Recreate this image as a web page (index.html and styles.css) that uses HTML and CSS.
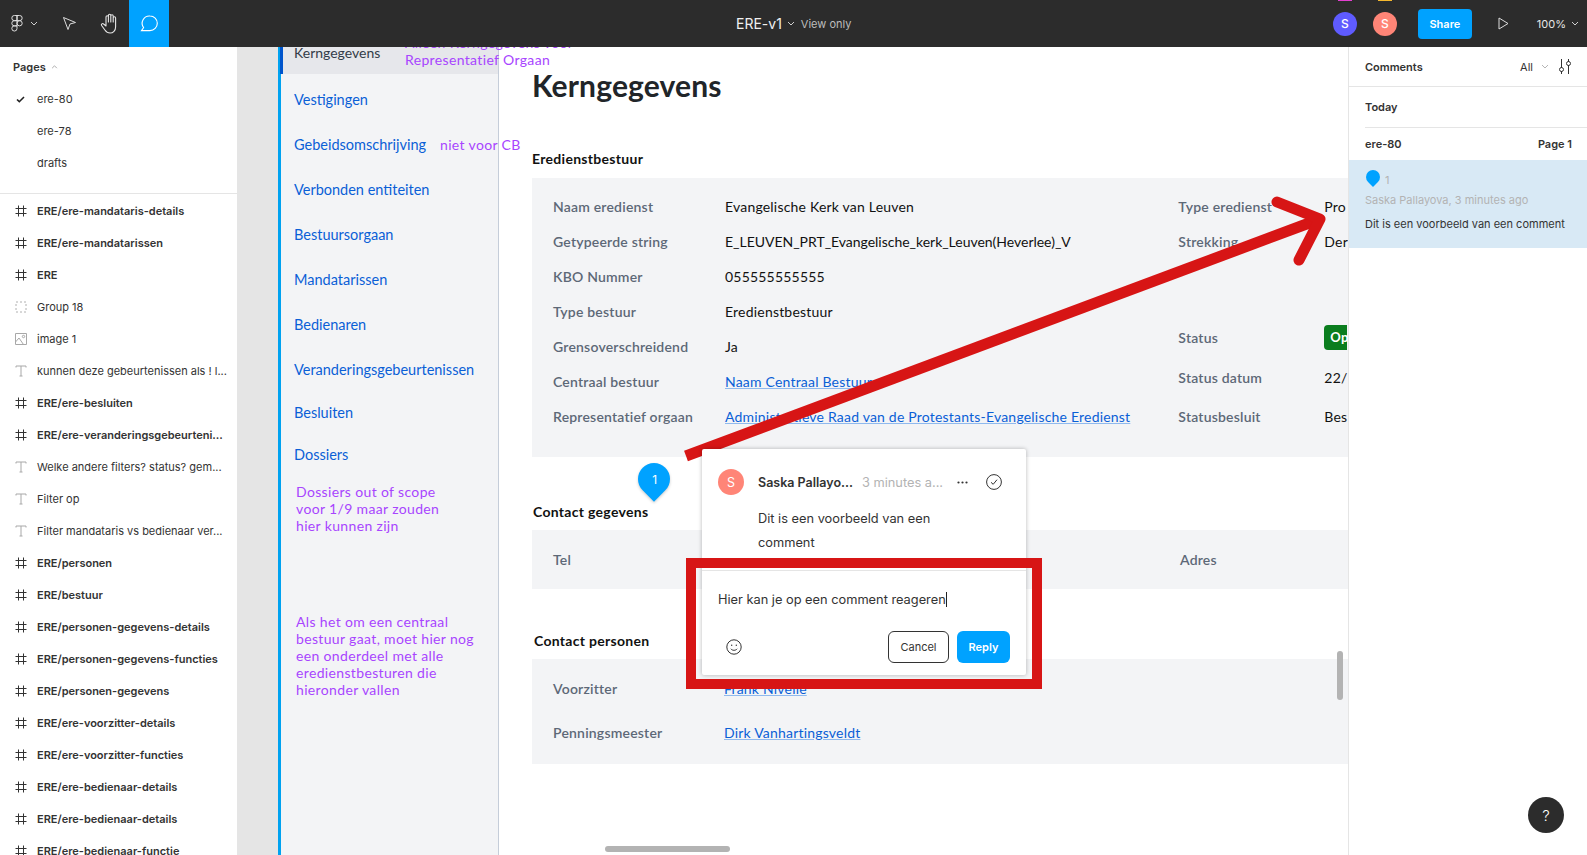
FILE: index.html
```html
<!DOCTYPE html>
<html>
<head>
  <title>ERE-v1</title>
  <meta charset="UTF-8">
  <link rel="stylesheet" href="styles.css">
</head>
<body>

  <!-- Icon set -->
  <svg class="icon-defs" width="0" height="0">
    <symbol id="i-frame" viewBox="0 0 12 12">
      <path d="M3.5 0.5V11.5M8.5 0.5V11.5M0.5 3.5H11.5M0.5 8.5H11.5" fill="none" stroke="#333" stroke-width="1"/>
    </symbol>
    <symbol id="i-text" viewBox="0 0 12 12">
      <path d="M1 2.5V1H11V2.5M6 1V11M4.5 11H7.5" fill="none" stroke="#a8a8a8" stroke-width="1"/>
    </symbol>
    <symbol id="i-group" viewBox="0 0 12 12">
      <path d="M1 1H11V11H1Z" fill="none" stroke="#b0b0b0" stroke-width="1" stroke-dasharray="2 2"/>
    </symbol>
    <symbol id="i-image" viewBox="0 0 12 12">
      <path d="M0.5 0.5H11.5V11.5H0.5ZM0.5 9L4 5L8.5 11.5" fill="none" stroke="#a8a8a8" stroke-width="1"/>
      <circle cx="8.5" cy="3.5" r="1.2" fill="none" stroke="#a8a8a8"/>
    </symbol>
  </svg>

  <header class="topbar">
    <div class="tools">
      <div class="tool tool-logo">
        <svg width="12" height="17" viewBox="0 0 12 18" fill="none" stroke="#e6e6e6" stroke-width="1">
          <path d="M6 .5H3.250a2.750 2.750 0 0 0 0 5.500H6zM6 .5h2.750a2.750 2.750 0 0 1 0 5.500H6zM6 6H3.250a2.750 2.750 0 0 0 0 5.500H6zM6 11.500H3.250A2.750 2.750 0 1 0 6 14.250zM6 8.750a2.750 2.750 0 1 0 5.500 0 2.750 2.750 0 0 0-5.500 0z"/>
        </svg>
        <svg width="8" height="5" viewBox="0 0 8 5" fill="none" stroke="#cfcfcf"><path d="M1 1l3 3 3-3"/></svg>
      </div>
      <div class="tool tool-move">
        <svg width="15" height="15" viewBox="0 0 15 15" fill="none" stroke="#dcdcdc"><path d="M1.5 1.5L13.5 6.5L8 8L6 13.5Z"/></svg>
      </div>
      <div class="tool tool-hand">
        <svg width="19" height="21" viewBox="0 0 19 21" fill="none" stroke="#e6e6e6" stroke-width="1.1" stroke-linecap="round" stroke-linejoin="round">
          <path d="M6 10V4a1.2 1.2 0 0 1 2.4 0V9M8.4 9V2.4a1.2 1.2 0 0 1 2.4 0V9M10.8 9V3a1.2 1.2 0 0 1 2.4 0v6M13.2 9V5a1.2 1.2 0 0 1 2.4 0v9c0 3.5-2.5 6-5.5 6-2.8 0-4-1.2-5.2-3L1.6 12.5c-.8-1.3.9-2.6 2-1.5L6 13V10"/>
        </svg>
      </div>
      <div class="tool tool-comment">
        <svg width="19" height="19" viewBox="0 0 19 19" fill="none" stroke="#fff" stroke-width="1.1">
          <path d="M10 2a7.3 7.3 0 0 1 0 14.6H1.5L3.6 13.600A7.300 7.300 0 0 1 10 2z"/>
        </svg>
      </div>
    </div>
    <div class="title">
      <span class="title-name">ERE-v1</span>
      <svg width="8" height="5" viewBox="0 0 8 5" fill="none" stroke="#cfcfcf"><path d="M1 1l3 3 3-3"/></svg>
      <span class="title-mode">View only</span>
    </div>
    <div class="top-actions">
      <div class="user user-blue">S<span class="user-tab tab-pink"></span></div>
      <div class="user user-red">S<span class="user-tab tab-yellow"></span></div>
      <button class="share">Share</button>
      <svg class="play" width="11" height="13" viewBox="0 0 11 13" fill="none" stroke="#dcdcdc"><path d="M1 1L10 6.500L1 12Z"/></svg>
      <span class="zoom">100%</span>
      <svg width="8" height="5" viewBox="0 0 8 5" fill="none" stroke="#cfcfcf"><path d="M1 1l3 3 3-3"/></svg>
    </div>
  </header>

  <div class="workspace">
    <aside class="left-panel">
      <div class="pages-head">
        <span>Pages</span>
        <svg width="7" height="4" viewBox="0 0 8 5" fill="none" stroke="#999"><path d="M1 4l3-3 3 3"/></svg>
      </div>
      <ul class="pages">
        <li class="page page-current">
          <svg width="9" height="7" viewBox="0 0 9 7" fill="none" stroke="#222" stroke-width="1.6"><path d="M1 3.500L3.300 5.700L8 1"/></svg>
          ere-80
        </li>
        <li class="page">ere-78</li>
        <li class="page">drafts</li>
      </ul>
      <ul class="layers">
        <li class="layer layer-frame"><svg><use href="#i-frame"/></svg>ERE/ere-mandataris-details</li>
        <li class="layer layer-frame"><svg><use href="#i-frame"/></svg>ERE/ere-mandatarissen</li>
        <li class="layer layer-frame"><svg><use href="#i-frame"/></svg>ERE</li>
        <li class="layer"><svg><use href="#i-group"/></svg>Group 18</li>
        <li class="layer"><svg><use href="#i-image"/></svg>image 1</li>
        <li class="layer"><svg><use href="#i-text"/></svg>kunnen deze gebeurtenissen als ! l...</li>
        <li class="layer layer-frame"><svg><use href="#i-frame"/></svg>ERE/ere-besluiten</li>
        <li class="layer layer-frame"><svg><use href="#i-frame"/></svg>ERE/ere-veranderingsgebeurteni...</li>
        <li class="layer"><svg><use href="#i-text"/></svg>Welke andere filters? status? gem...</li>
        <li class="layer"><svg><use href="#i-text"/></svg>Filter op</li>
        <li class="layer"><svg><use href="#i-text"/></svg>Filter mandataris vs bedienaar ver...</li>
        <li class="layer layer-frame"><svg><use href="#i-frame"/></svg>ERE/personen</li>
        <li class="layer layer-frame"><svg><use href="#i-frame"/></svg>ERE/bestuur</li>
        <li class="layer layer-frame"><svg><use href="#i-frame"/></svg>ERE/personen-gegevens-details</li>
        <li class="layer layer-frame"><svg><use href="#i-frame"/></svg>ERE/personen-gegevens-functies</li>
        <li class="layer layer-frame"><svg><use href="#i-frame"/></svg>ERE/personen-gegevens</li>
        <li class="layer layer-frame"><svg><use href="#i-frame"/></svg>ERE/ere-voorzitter-details</li>
        <li class="layer layer-frame"><svg><use href="#i-frame"/></svg>ERE/ere-voorzitter-functies</li>
        <li class="layer layer-frame"><svg><use href="#i-frame"/></svg>ERE/ere-bedienaar-details</li>
        <li class="layer layer-frame"><svg><use href="#i-frame"/></svg>ERE/ere-bedienaar-details</li>
        <li class="layer layer-frame"><svg><use href="#i-frame"/></svg>ERE/ere-bedienaar-functie</li>
      </ul>
    </aside>

    <main class="canvas">
      <div class="artboard">
        <nav class="art-nav">
          <a class="art-link art-link-active">Kerngegevens</a>
          <a class="art-link art-link-first">Vestigingen</a>
          <a class="art-link">Gebeidsomschrijving</a>
          <a class="art-link">Verbonden entiteiten</a>
          <a class="art-link">Bestuursorgaan</a>
          <a class="art-link">Mandatarissen</a>
          <a class="art-link">Bedienaren</a>
          <a class="art-link">Veranderingsgebeurtenissen</a>
          <a class="art-link art-link-short art-link-besluiten">Besluiten</a>
          <a class="art-link art-link-short">Dossiers</a>
          <p class="note note-dossiers">Dossiers out of scope<br>voor 1/9 maar zouden<br>hier kunnen zijn</p>
          <p class="note note-bestuur">Als het om een centraal<br>bestuur gaat, moet hier nog<br>een onderdeel met alle<br>eredienstbesturen die<br>hieronder vallen</p>
        </nav>

        <section class="art-content">
          <h1 class="art-title">Kerngegevens</h1>

          <h2 class="art-head art-head-first">Eredienstbestuur</h2>
          <div class="info-box info-main">
            <dl class="info-col info-left">
              <dt>Naam eredienst</dt><dd>Evangelische Kerk van Leuven</dd>
              <dt>Getypeerde string</dt><dd class="info-string">E_LEUVEN_PRT_Evangelische_kerk_Leuven(Heverlee)_V</dd>
              <dt>KBO Nummer</dt><dd>055555555555</dd>
              <dt>Type bestuur</dt><dd>Eredienstbestuur</dd>
              <dt>Grensoverschreidend</dt><dd>Ja</dd>
              <dt>Centraal bestuur</dt><dd><a class="art-a">Naam Centraal Bestuur</a></dd>
              <dt>Representatief orgaan</dt><dd><a class="art-a">Administratieve Raad van de Protestants-Evangelische Eredienst</a></dd>
            </dl>
            <dl class="info-col info-right">
              <dt>Type eredienst</dt><dd>Pro</dd>
              <dt>Strekking</dt><dd>Der</dd>
              <dt class="row-status">Status</dt><dd class="row-status"><span class="badge">Op</span></dd>
              <dt class="row-datum">Status datum</dt><dd class="row-datum">22/</dd>
              <dt class="row-besluit">Statusbesluit</dt><dd class="row-besluit">Bes</dd>
            </dl>
          </div>

          <h2 class="art-head art-head-contact">Contact gegevens</h2>
          <div class="info-box info-contact">
            <span class="info-label">Tel</span>
            <span class="info-label">Adres</span>
          </div>

          <h2 class="art-head art-head-persons">Contact personen</h2>
          <div class="info-box info-persons">
            <dl class="info-col info-left">
              <dt>Voorzitter</dt><dd><a class="art-a">Frank Nivelle</a></dd>
              <dt>Penningsmeester</dt><dd><a class="art-a">Dirk Vanhartingsveldt</a></dd>
            </dl>
          </div>
        </section>
      </div>

      <p class="note note-top">Alleen Kerngegevens voor<br>Representatief Orgaan</p>
      <p class="note note-cb">niet voor CB</p>

      <!-- comment marker and popup lie over the artboard -->
      <div class="pin"><span class="pin-num">1</span></div>

      <svg class="arrow" width="660" height="280" viewBox="0 0 660 280" fill="none" stroke="#d71515" stroke-width="11">
        <path d="M3 269L637 32"/>
        <path d="M594 15L637 32L616 73" stroke-linecap="round" stroke-linejoin="round"/>
      </svg>

      <div class="popup">
        <div class="popup-head">
          <span class="popup-avatar">S</span>
          <span class="popup-name">Saska Pallayo...</span>
          <span class="popup-time">3 minutes a...</span>
          <span class="popup-dots">
            <svg width="11" height="3" viewBox="0 0 11 3" fill="#333"><circle cx="1.500" cy="1.500" r="1.100"/><circle cx="5.500" cy="1.500" r="1.100"/><circle cx="9.500" cy="1.500" r="1.100"/></svg>
          </span>
          <svg class="popup-check" width="16" height="16" viewBox="0 0 16 16" fill="none" stroke="#333"><circle cx="8" cy="8" r="7.400"/><path d="M5 8.300L7.200 10.300L11 5.700"/></svg>
        </div>
        <p class="popup-text">Dit is een voorbeeld van een comment</p>
        <div class="popup-reply">
          <div class="popup-input">Hier kan je op een comment reageren<span class="caret"></span></div>
          <div class="popup-actions">
            <svg class="popup-emoji" width="16" height="16" viewBox="0 0 16 16" fill="none" stroke="#333"><circle cx="8" cy="8" r="7.200"/><path d="M4.800 9.800c1.600 2 4.800 2 6.400 0"/><circle cx="5.700" cy="6.300" r=".7" fill="#333" stroke="none"/><circle cx="10.300" cy="6.300" r=".7" fill="#333" stroke="none"/></svg>
            <button class="btn-cancel">Cancel</button>
            <button class="btn-reply">Reply</button>
          </div>
        </div>
      </div>
      <div class="red-frame"></div>

      <div class="scroll-v"></div>
      <div class="scroll-h"></div>
    </main>

    <aside class="right-panel">
      <div class="comments-head">
        <span class="comments-title">Comments</span>
        <span class="comments-all">All</span>
        <svg width="8" height="5" viewBox="0 0 8 5" fill="none" stroke="#b5b5b5"><path d="M1 1l3 3 3-3"/></svg>
        <svg class="comments-filter" width="14" height="15" viewBox="0 0 14 15" fill="none" stroke="#333"><path d="M3.500 0V9M3.500 12V15M10.500 0V3M10.500 6V15"/><circle cx="3.500" cy="10.500" r="2"/><circle cx="10.500" cy="4.500" r="2"/></svg>
      </div>
      <div class="comments-day"><span>Today</span></div>
      <div class="comments-page"><span>ere-80</span><span>Page 1</span></div>
      <div class="comment-item">
        <div class="comment-mark"><span class="mini-pin"></span><span class="mini-num">1</span></div>
        <div class="comment-meta">Saska Pallayova, 3 minutes ago</div>
        <div class="comment-body">Dit is een voorbeeld van een comment</div>
      </div>
      <button class="help">?</button>
    </aside>
  </div>

</body>
</html>
```

FILE: styles.css
```css
* {
  box-sizing: border-box;
}

body {
  margin: 0;
  height: 855px;
  overflow: hidden;
  display: flex;
  flex-direction: column;
  font-family: "Inter", "Liberation Sans", sans-serif;
  font-size: 11px;
  color: #333;
  background-color: #fff;
}

.icon-defs {
  position: absolute;
}

/* Top bar */
.topbar {
  height: 47px;
  flex: none;
  display: flex;
  align-items: center;
  background-color: #2c2c2c;
  color: #fff;
  position: relative;
  z-index: 5;
}

.tools {
  display: flex;
  height: 100%;
}

.tool {
  height: 47px;
  display: flex;
  align-items: center;
  justify-content: center;
}

.tool-logo {
  width: 49px;
  gap: 7px;
  justify-content: flex-start;
  padding-left: 11px;
}

.tool-move {
  width: 40px;
}

.tool-hand {
  width: 40px;
}

.tool-comment {
  width: 40px;
  background-color: #00a2ff;
}

.title {
  position: absolute;
  left: 736px;
  top: 0;
  height: 47px;
  display: flex;
  align-items: center;
  gap: 5px;
}

.title-name {
  font-size: 14px;
  color: #f0f0f0;
}

.title-mode {
  font-size: 11px;
  color: #bdbdbd;
  margin-left: 1px;
}

.top-actions {
  margin-left: auto;
  display: flex;
  align-items: center;
  padding-right: 8px;
}

.user {
  width: 24px;
  height: 24px;
  border-radius: 50%;
  display: flex;
  align-items: center;
  justify-content: center;
  font-size: 12px;
  font-weight: 500;
  position: relative;
  margin-right: 16px;
}

.user-blue {
  background-color: #5f5bff;
}

.user-red {
  background-color: #ff8577;
  margin-right: 21px;
}

.user-tab {
  position: absolute;
  top: -12px;
  left: 5px;
  width: 14px;
  height: 1px;
}

.tab-pink {
  background-color: #e33fd0;
}

.tab-yellow {
  background-color: #f5b82e;
}

.share {
  width: 54px;
  height: 30px;
  border: none;
  border-radius: 4px;
  background-color: #00a2ff;
  color: #fff;
  font-family: inherit;
  font-size: 11px;
  font-weight: 600;
  margin-right: 26px;
}

.play {
  margin-right: 28px;
}

.zoom {
  font-size: 11px;
  color: #e6e6e6;
  margin-right: 5px;
}

/* Left panel */
.workspace {
  flex: 1;
  display: flex;
  min-height: 0;
}

.left-panel {
  width: 237px;
  flex: none;
  background-color: #fff;
  overflow: hidden;
}

.pages-head {
  height: 36px;
  padding: 4px 0 0 13px;
  display: flex;
  align-items: center;
  gap: 5px;
  font-weight: 600;
}

ul {
  list-style: none;
  margin: 0;
  padding: 0;
}

.pages {
  height: 111px;
  border-bottom: 1px solid #e5e5e5;
}

.page {
  height: 32px;
  padding-left: 37px;
  display: flex;
  align-items: center;
  position: relative;
}

.page-current svg {
  position: absolute;
  left: 16px;
  top: 13px;
}

.layers {
  padding-top: 1px;
}

.layer {
  height: 32px;
  padding-left: 37px;
  display: flex;
  align-items: center;
  white-space: nowrap;
  position: relative;
}

.layer svg {
  position: absolute;
  left: 15px;
  top: 10px;
  width: 12px;
  height: 12px;
}

.layer-frame {
  font-weight: 600;
}

/* Canvas */
.canvas {
  flex: 1;
  position: relative;
  overflow: hidden;
  background-color: #e5e5e5;
}

.artboard {
  margin-left: 41px;
  height: 100%;
  display: flex;
  font-family: "Lato", "Liberation Sans", sans-serif;
}

.art-nav {
  width: 221px;
  flex: none;
  background-color: #f3f4f6;
  border-left: 3px solid #00a2f0;
  border-right: 1px solid #c5cdd9;
  padding-bottom: 20px;
}

.art-link {
  height: 45px;
  display: flex;
  align-items: center;
  padding-left: 13px;
  font-size: 14.5px;
  color: #0a5fd6;
}

.art-link-active {
  height: 27px;
  align-items: flex-start;
  line-height: 11px;
  font-size: 14px;
  color: #333c48;
  background-color: #e6e7eb;
  border-left: 3px solid #0055cc;
  margin-left: -1px;
  padding-left: 11px;
  margin-bottom: 3px;
}

.art-link-short {
  height: 42px;
}

.art-link-besluiten {
  margin-top: -1px;
}

.note {
  margin: 0;
  font-family: "Lato", "Liberation Sans", sans-serif;
  font-size: 14px;
  line-height: 17.2px;
  color: #a845ff;
  letter-spacing: .35px;
}

.note-dossiers {
  margin: 8px 0 0 15px;
}

.note-bestuur {
  margin: 78px 0 0 15px;
}

.note-top {
  position: absolute;
  left: 168px;
  top: -13px;
}

.note-cb {
  position: absolute;
  left: 203px;
  top: 89px;
}

.art-content {
  flex: 1;
  min-width: 0;
  background-color: #fff;
  padding-left: 33px;
}

.art-title {
  margin: 0;
  padding-top: 18px;
  font-size: 30px;
  line-height: 40px;
  font-weight: 700;
  letter-spacing: .15px;
  color: #212529;
}

.art-head {
  margin: 0;
  font-size: 14px;
  line-height: 20px;
  font-weight: 700;
  letter-spacing: .3px;
  color: #111;
}

.art-head-first {
  padding-top: 44px;
  padding-bottom: 9px;
}

.art-head-contact {
  padding-top: 45px;
  padding-bottom: 8px;
  margin-left: 1px;
}

.art-head-persons {
  padding-top: 42px;
  padding-bottom: 8px;
  margin-left: 2px;
}

.info-box {
  background-color: #f3f4f6;
  font-size: 14px;
  letter-spacing: .2px;
  padding-left: 21px;
  display: flex;
  overflow: hidden;
}

.info-main {
  height: 279px;
  padding-top: 11px;
}

.info-contact {
  height: 59px;
  align-items: center;
}

.info-persons {
  height: 105px;
  padding-top: 7px;
}

.info-col {
  margin: 0;
  display: grid;
  grid-auto-rows: 35px;
  align-items: center;
}

.info-left {
  width: 628px;
  grid-template-columns: 172px 1fr;
}

.info-persons .info-left {
  grid-auto-rows: 44px;
  grid-template-columns: 171px 1fr;
}

.info-right {
  grid-template-columns: 146px 1fr;
  grid-template-rows: 35px 35px 60px 36px 45px 32px;
}

.info-col dt,
.info-label {
  color: #5d6877;
  font-weight: 600;
}

.info-col dd {
  margin: 0;
  color: #111;
  white-space: nowrap;
}

.info-col .info-string {
  letter-spacing: -.02px;
}

.row-status {
  grid-row: 4;
}

.row-datum {
  grid-row: 5;
}

.row-besluit {
  grid-row: 6;
}

.info-label {
  width: 627px;
  flex: none;
}

.art-a {
  color: #0a5fd6;
  text-decoration: underline;
  text-decoration-color: #8fb9ee;
}

.badge {
  display: block;
  height: 25px;
  line-height: 25px;
  padding-left: 6px;
  width: 23px;
  border-radius: 4px 0 0 4px;
  background-color: #0a7d1e;
  color: #fff;
  font-size: 13px;
  font-weight: 700;
}

/* Marker, arrow, popup */
.pin {
  position: absolute;
  left: 401px;
  top: 416px;
  width: 32px;
  height: 32px;
  border-radius: 50% 50% 50% 0;
  transform: rotate(-45deg);
  background-color: #00a2ff;
  box-shadow: -1px 1px 3px rgba(0, 0, 0, .2);
  color: #fff;
  font-size: 12px;
  display: flex;
  align-items: center;
  justify-content: center;
}

.pin-num {
  transform: rotate(45deg);
}

.arrow {
  position: absolute;
  left: 446px;
  top: 140px;
}

.popup {
  position: absolute;
  left: 465px;
  top: 402px;
  width: 324px;
  height: 226px;
  background-color: #fff;
  border-radius: 2px;
  box-shadow: 0 0 4px rgba(0, 0, 0, .28);
}

.popup-head {
  height: 66px;
  padding: 0 24px 0 16px;
  display: flex;
  align-items: center;
  font-size: 12.5px;
}

.popup-avatar {
  width: 26px;
  height: 26px;
  border-radius: 50%;
  background-color: #ff8577;
  color: #fff;
  display: flex;
  align-items: center;
  justify-content: center;
  margin-right: 14px;
}

.popup-name {
  font-weight: 600;
  margin-right: 9px;
}

.popup-time {
  color: #b3b3b3;
  font-size: 12.8px;
}

.popup-dots {
  margin-left: auto;
  margin-right: 18px;
  display: flex;
}

.popup-text {
  margin: -8px 0 0;
  padding-left: 56px;
  box-sizing: content-box;
  width: 190px;
  font-size: 12.8px;
  line-height: 24px;
  height: 63px;
}

.popup-reply {
  border-top: 1px solid #e5e5e5;
  padding: 0 16px;
}

.popup-input {
  height: 60px;
  padding-bottom: 4px;
  display: flex;
  align-items: center;
  font-size: 12.8px;
}

.caret {
  width: 1px;
  height: 15px;
  background-color: #222;
}

.popup-actions {
  display: flex;
  align-items: center;
}

.popup-emoji {
  margin-left: 8px;
  margin-right: auto;
}

.popup-actions button {
  height: 32px;
  border-radius: 6px;
  font-family: inherit;
  font-size: 11px;
}

.btn-cancel {
  width: 61px;
  background-color: #fff;
  border: 1px solid #333;
  color: #333;
  margin-right: 8px;
}

.btn-reply {
  width: 53px;
  border: none;
  background-color: #00a2ff;
  color: #fff;
  font-weight: 600;
}

.red-frame {
  position: absolute;
  left: 449px;
  top: 511px;
  width: 356px;
  height: 131px;
  border: 10px solid #d71515;
}

.scroll-v {
  position: absolute;
  left: 1100px;
  top: 604px;
  width: 6px;
  height: 49px;
  border-radius: 3px;
  background-color: #b3b3b3;
}

.scroll-h {
  position: absolute;
  left: 368px;
  top: 799px;
  width: 125px;
  height: 6px;
  border-radius: 3px;
  background-color: #b3b3b3;
}

/* Right panel */
.right-panel {
  width: 239px;
  flex: none;
  background-color: #fff;
  border-left: 1px solid #e5e5e5;
  position: relative;
}

.comments-head {
  height: 40px;
  border-bottom: 1px solid #e5e5e5;
  padding: 0 15px 0 16px;
  display: flex;
  align-items: center;
  font-weight: 600;
}

.comments-all {
  margin-left: auto;
  margin-right: 8px;
  font-weight: 400;
}

.comments-filter {
  margin-left: 9px;
}

.comments-day {
  margin-left: 16px;
  height: 41px;
  border-bottom: 1px solid #e5e5e5;
  display: flex;
  align-items: center;
  font-weight: 600;
}

.comments-page {
  height: 32px;
  padding: 0 15px 0 16px;
  display: flex;
  align-items: center;
  justify-content: space-between;
  font-weight: 600;
}

.comment-item {
  height: 88px;
  padding: 7px 16px 0;
  background-color: #d8e9f5;
}

.comment-mark {
  display: flex;
  align-items: flex-end;
  height: 20px;
  gap: 5px;
}

.mini-pin {
  width: 14px;
  height: 14px;
  margin-bottom: 3px;
  margin-left: 1px;
  border-radius: 50% 50% 50% 0;
  transform: rotate(-45deg);
  background-color: #00a2ff;
}

.mini-num {
  color: #b3b3b3;
}

.comment-meta {
  margin-top: 6px;
  color: #b3b3b3;
}

.comment-body {
  margin-top: 10px;
}

.help {
  position: absolute;
  right: 23px;
  bottom: 22px;
  width: 36px;
  height: 36px;
  border: none;
  border-radius: 50%;
  background-color: #2c2c2c;
  color: #fff;
  font-family: inherit;
  font-size: 15px;
  font-weight: 300;
}
```
